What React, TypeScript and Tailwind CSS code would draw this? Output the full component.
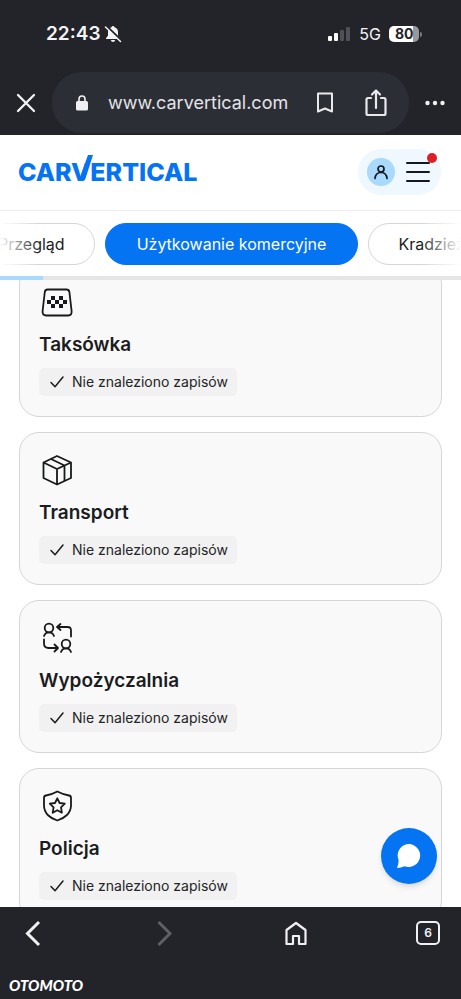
import { useState } from "react";

const TaxiIcon: React.FC = () => (
  <svg viewBox="0 0 36 36" className="size-9" fill="none" stroke="#18191b" strokeWidth="1.8" aria-hidden="true">
    <path d="M8.600 5.500H27.400Q30 5.500 30.400 8L32.600 27Q33 31.500 29.200 31.500H7.200Q3.200 31.500 3.600 27L5.800 8Q6.200 5.500 8.600 5.500Z" />
    <g fill="#18191b" stroke="none">
      <path d="M12 12h4v4h-4zM20 12h4v4h-4zM8 16h4v4H8zM16 16h4v4h-4zM24 16h4v4h-4zM12 20h4v4h-4zM20 20h4v4h-4z" />
    </g>
  </svg>
);

const BoxIcon: React.FC = () => (
  <svg viewBox="0 0 36 36" className="size-9" fill="none" stroke="#18191b" strokeWidth="1.8" strokeLinejoin="round" aria-hidden="true">
    <path d="M18 4L32 10.500V26L18 32.500L4.500 26V10.500Z" />
    <path d="M4.500 10.500L18 17L32 10.500M18 17V32.500M12 7L25.500 13.500V29" />
  </svg>
);

const RentalIcon: React.FC = () => (
  <svg viewBox="0 0 36 36" className="size-9" fill="none" stroke="#18191b" strokeWidth="1.8" strokeLinecap="round" strokeLinejoin="round" aria-hidden="true">
    <circle cx="10" cy="8" r="4.300" />
    <path d="M5 16Q6.200 12.300 10 12.300T15 16" />
    <circle cx="27" cy="24" r="4.300" />
    <path d="M22 32Q23.200 28.300 27 28.300T32 32" />
    <path d="M32 16.500V10.500Q32 7 28.500 7H18.500M21.500 4L18 7L21.500 10" />
    <path d="M5 19.500V23.500Q5 28 9.500 28H18.500M15.500 24.500L19 28L15.500 31.500" />
  </svg>
);

const PoliceIcon: React.FC = () => (
  <svg viewBox="0 0 36 36" className="size-9" fill="none" stroke="#18191b" strokeWidth="1.8" strokeLinejoin="round" aria-hidden="true">
    <path d="M18.300 3.500Q24 6.500 30 7.500Q32 7.800 32 10V17.500C32 25.500 25 30.500 18.300 32.500C11.500 30.500 5 25.500 5 17.500V10Q5 7.800 7 7.500Q13 6.500 18.300 3.500Z" />
    <path d="M18.300 10.300L20.600 15L25.800 15.700L22 19.400L22.900 24.700L18.300 22.200L13.700 24.700L14.600 19.400L10.800 15.700L16 15Z" />
  </svg>
);

const records = [
  { title: "Taksówka", Icon: TaxiIcon },
  { title: "Transport", Icon: BoxIcon },
  { title: "Wypożyczalnia", Icon: RentalIcon },
  { title: "Policja", Icon: PoliceIcon },
];

const tabs = ["Przegląd", "Użytkowanie komercyjne", "Kradzieże"];

const StatusBar: React.FC = () => (
  <div className="flex h-[72px] items-center justify-between pr-[39px] pb-1 pl-[46px]">
    <div className="flex items-center gap-1">
      <span className="text-[19px] leading-6 font-semibold">22:43</span>
      <svg viewBox="0 0 18 18" className="size-[18px]" aria-label="Wyciszony">
        <path d="M9 1Q10.200 1 10.500 2.200Q14 3.200 14 7V10.500L16 13.200V14H2V13.200L4 10.500V7Q4 3.200 7.500 2.200Q7.800 1 9 1ZM6.800 15H11.200Q10.800 17 9 17T6.800 15Z" fill="#f4f4f6" />
        <path d="M2.500 1L17.500 15.500" stroke="#232429" strokeWidth="2" />
        <path d="M1.500 2L16.500 16.500" stroke="#f4f4f6" strokeWidth="1.500" strokeLinecap="round" />
      </svg>
    </div>
    <div className="flex items-center gap-2">
      <div className="flex items-center gap-2">
        <svg viewBox="0 0 24 16" className="h-4 w-6" aria-label="Zasięg">
          <rect x="1" y="10" width="4" height="5" rx="1" fill="#fff" />
          <rect x="7" y="7" width="4" height="8" rx="1" fill="#fff" />
          <rect x="13" y="4" width="4" height="11" rx="1" fill="#505156" />
          <rect x="19" y="1" width="4" height="14" rx="1" fill="#505156" />
        </svg>
        <span className="text-base leading-6">5G</span>
      </div>
      <div className="flex items-center">
        <span className="flex h-4 w-[30px] items-center rounded-[5px] bg-linear-to-r from-white from-80% to-[#98989b] to-80% pl-[6px] text-sm font-bold text-[#232429]">
          80
        </span>
        <span className="ml-px h-[5px] w-[2px] rounded-r-full bg-[#77787c]" />
      </div>
    </div>
  </div>
);

const AddressBar: React.FC = () => (
  <div className="flex items-center pb-[2px]">
    <button aria-label="Zamknij" className="flex w-[52px] justify-center">
      <svg viewBox="0 0 20 20" className="size-5" stroke="#f4f4f6" strokeWidth="2.300" strokeLinecap="round" aria-hidden="true">
        <path d="M2 2L18 18M18 2L2 18" />
      </svg>
    </button>
    <div className="flex h-[61px] flex-1 items-center rounded-[30px] bg-[#2c2e36] pr-[21px] pl-6">
      <svg viewBox="0 0 12 16" className="h-4 w-3" aria-hidden="true">
        <rect y="6" width="12" height="9.500" rx="1.500" fill="#f0f0f3" />
        <path d="M3 7V4Q3 1 6 1T9 4V7" fill="none" stroke="#f0f0f3" strokeWidth="1.600" />
      </svg>
      <span className="ml-5 flex-1 text-lg leading-6 text-[#e3e3e7]">www.carvertical.com</span>
      <button aria-label="Dodaj zakładkę">
        <svg viewBox="0 0 18 22" className="h-[22px] w-[18px]" fill="none" stroke="#e9e9ed" strokeWidth="2" strokeLinejoin="round" aria-hidden="true">
          <path d="M2 1.500H16V19.500L9 16.500L2 19.500Z" />
        </svg>
      </button>
      <button aria-label="Udostępnij" className="ml-[30px]">
        <svg viewBox="0 0 24 30" className="h-[30px] w-6" fill="none" stroke="#e9e9ed" strokeWidth="2.200" strokeLinejoin="round" strokeLinecap="round" aria-hidden="true">
          <path d="M7 10H4Q2.500 10 2.500 11.500V25.500Q2.500 27 4 27H20Q21.500 27 21.500 25.500V11.500Q21.500 10 20 10H17M12 20V3M8 6.500L12 2.500L16 6.500" />
        </svg>
      </button>
    </div>
    <button aria-label="Więcej" className="flex w-[52px] justify-center">
      <svg viewBox="0 0 20 6" className="h-[6px] w-5" fill="#f0f0f3" aria-hidden="true">
        <circle cx="2.500" cy="3" r="2.200" />
        <circle cx="10" cy="3" r="2.200" />
        <circle cx="17.500" cy="3" r="2.200" />
      </svg>
    </button>
  </div>
);

const SiteHeader: React.FC = () => (
  <header className="flex h-[76px] items-center justify-between border-b border-[#f0ecec] bg-white pr-5 pb-[2px] pl-[18px]">
    <a href="#" className="text-[25px] leading-6 font-extrabold text-[#0574f3]">
      CAR
      <span className="relative">
        V
        {/* long right arm of the V */}
        <svg viewBox="0 0 16 26" className="absolute right-[-3px] bottom-[6px] h-[26px] w-4" aria-hidden="true">
          <path d="M11 0H16L8 25H2Z" fill="#0574f3" />
        </svg>
      </span>
      ERTICAL
    </a>
    <div className="relative flex h-[46px] items-center gap-[10px] rounded-full bg-[#eff7ff] pr-[10px] pl-[9px]">
      <button aria-label="Konto" className="flex size-7 items-center justify-center rounded-full bg-[#a9d9fc]">
        <svg viewBox="0 0 16 16" className="size-4" fill="none" stroke="#15181d" strokeWidth="1.700" strokeLinecap="round" aria-hidden="true">
          <circle cx="8" cy="5" r="3" />
          <path d="M2 14.500Q2.500 8.500 8 8.500T14 14.500" />
        </svg>
      </button>
      <button aria-label="Menu">
        <svg viewBox="0 0 26 22" className="h-[22px] w-[26px]" stroke="#15181d" strokeWidth="2" strokeLinecap="round" aria-hidden="true">
          <path d="M2 2H24M2 11H24M2 20H24" />
        </svg>
      </button>
      <span className="absolute top-1 right-1 size-[10px] rounded-full bg-[#df1f26]" />
    </div>
  </header>
);

const Record: React.FC<{ title: string; Icon: React.FC }> = ({ title, Icon }) => (
  <article className="flex shrink-0 flex-col items-start rounded-[20px] border border-[#d6d6d7] bg-[#f9f9f9] p-[19px] pb-5">
    <Icon />
    <h2 className="mt-[13px] text-[19px] leading-6 font-semibold text-[#1b1c1e]">{title}</h2>
    <p className="mt-[11px] flex h-7 items-center gap-2 rounded-[5px] bg-[#f1f1f1] pr-[9px] pl-[11px] text-sm text-[#242527]">
      <svg viewBox="0 0 14 14" className="size-[14px]" fill="none" stroke="#1b1c1e" strokeWidth="1.500" strokeLinecap="round" strokeLinejoin="round" aria-hidden="true">
        <path d="M1 7.500L5 11.800L13 2" />
      </svg>
      Nie znaleziono zapisów
    </p>
  </article>
);

const BottomBar: React.FC = () => (
  <footer className="flex h-[92px] shrink-0 flex-col justify-between bg-[#232429] pt-3 pb-1">
    <div className="flex items-center justify-between px-[19px]">
      <button aria-label="Wstecz">
        <svg viewBox="0 0 28 28" className="size-7" fill="none" stroke="#f0f0f3" strokeWidth="3" aria-hidden="true">
          <path d="M20 3L8.500 14.500L20 26" />
        </svg>
      </button>
      <button aria-label="Dalej" disabled>
        <svg viewBox="0 0 28 28" className="size-7" fill="none" stroke="#5f6065" strokeWidth="3" aria-hidden="true">
          <path d="M7.500 3L19 14.500L7.500 26" />
        </svg>
      </button>
      <button aria-label="Strona główna">
        <svg viewBox="0 0 28 28" className="size-7" fill="none" stroke="#f0f0f3" strokeWidth="2.200" strokeLinejoin="round" aria-hidden="true">
          <path d="M4.500 11L14 4L23.500 11V25H17V17H11V25H4.500Z" />
        </svg>
      </button>
      <button aria-label="Karty" className="flex size-7 items-center justify-center">
        <span className="flex size-6 items-center justify-center rounded-[5px] border-2 border-[#f0f0f3] text-xs font-semibold text-[#f0f0f3]">
          6
        </span>
      </button>
    </div>
    <span className="pl-[9px] font-[Lato,sans-serif] text-[15px] leading-5 font-black text-white italic">OTOMOTO</span>
  </footer>
);

export default function App() {
  const [active, setActive] = useState(1);
  const progress = 9.3;

  return (
    <div className="flex h-screen flex-col overflow-hidden bg-white font-[Inter,sans-serif]">
      <div className="bg-[#232429] text-[#f4f4f6]">
        <StatusBar />
        <AddressBar />
      </div>
      <SiteHeader />

      <nav className="relative overflow-hidden bg-white pt-3 pb-[11px]">
        <div className="-ml-8 flex gap-[10px]">
          {tabs.map((tab, i) => (
            <button
              key={tab}
              onClick={() => setActive(i)}
              className={
                i === active
                  ? "h-[42px] shrink-0 rounded-full border border-[#0574f3] bg-[#0574f3] px-[31px] text-base text-white"
                  : "h-[42px] shrink-0 rounded-full border border-[#d6d6d7] bg-white px-[29px] text-base text-[#1b1c1e]"
              }
            >
              {tab}
            </button>
          ))}
        </div>
        <div className="pointer-events-none absolute inset-y-0 left-0 w-10 bg-linear-to-r from-white to-transparent" />
        <div className="pointer-events-none absolute inset-y-0 right-0 w-10 bg-linear-to-l from-white to-transparent" />
      </nav>
      <div className="z-10 h-1 shrink-0 bg-[#e5e5e5]">
        <div className="h-full bg-[#a9d9fc]" style={{ width: `${progress}%` }} />
      </div>

      <div className="relative min-h-0 flex-1 overflow-hidden">
        {/* list is scrolled slightly under the tabs */}
        <main className="-mt-4 flex flex-col gap-[15px] px-[19px]">
          {records.map((r) => (
            <Record key={r.title} title={r.title} Icon={r.Icon} />
          ))}
        </main>
        <button aria-label="Czat" className="absolute right-6 bottom-[23px] flex size-14 items-center justify-center rounded-full bg-[#0574f3] shadow-md">
          <svg viewBox="0 0 28 28" className="size-7" fill="#fff" aria-hidden="true">
            <path d="M14.500 2A11.500 11.500 0 1 1 9.500 24.200Q6 26 2 26Q3.800 22 3.600 18A11.500 11.500 0 0 1 14.500 2Z" />
          </svg>
        </button>
      </div>

      <BottomBar />
    </div>
  );
}
